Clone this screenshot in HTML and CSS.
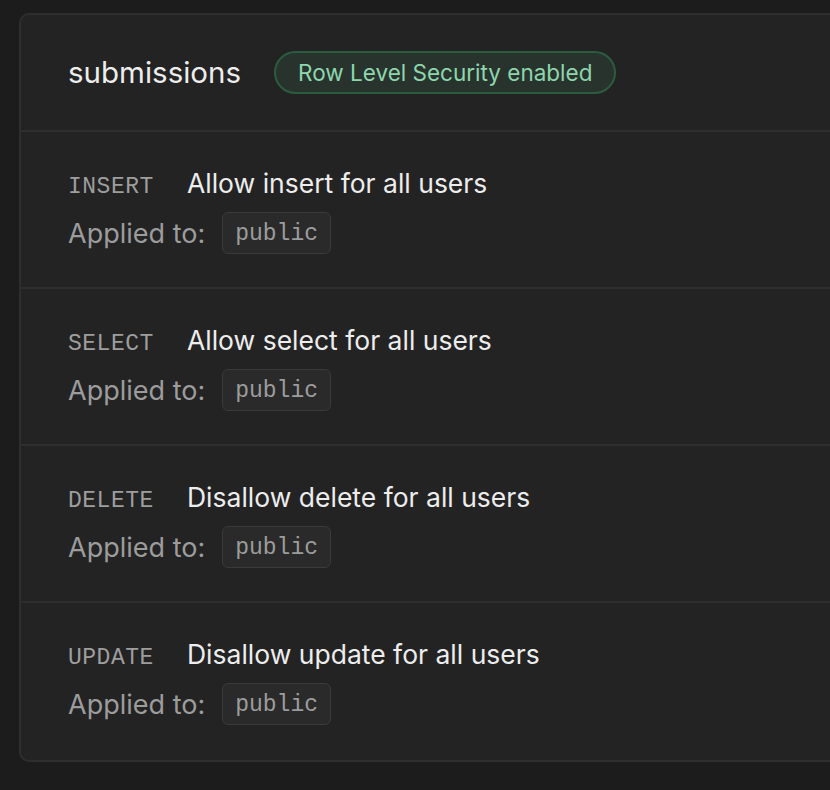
FILE: index.html
```html
<!DOCTYPE html>
<html>
<head>
<meta charset="utf-8">
<link rel="stylesheet" href="styles.css">
</head>
<body>
<div class="page">
  <section class="card">
    <header class="card-head">
      <h1 class="title">submissions</h1>
      <span class="badge">Row Level Security enabled</span>
    </header>
    <div class="policy">
      <div class="line1"><span class="method">INSERT</span><span class="name">Allow insert for all users</span></div>
      <div class="line2"><span class="label">Applied to:</span><code class="chip">public</code></div>
    </div>
    <div class="policy">
      <div class="line1"><span class="method">SELECT</span><span class="name">Allow select for all users</span></div>
      <div class="line2"><span class="label">Applied to:</span><code class="chip">public</code></div>
    </div>
    <div class="policy">
      <div class="line1"><span class="method">DELETE</span><span class="name">Disallow delete for all users</span></div>
      <div class="line2"><span class="label">Applied to:</span><code class="chip">public</code></div>
    </div>
    <div class="policy">
      <div class="line1"><span class="method">UPDATE</span><span class="name">Disallow update for all users</span></div>
      <div class="line2"><span class="label">Applied to:</span><code class="chip">public</code></div>
    </div>
  </section>
</div>
</body>
</html>
```

FILE: styles.css
```css
html, body {
  margin: 0;
  padding: 0;
  background: #1c1c1c;
  height: 100%;
  overflow: hidden;
}
body {
  font-family: "Inter", "Noto Sans", sans-serif;
  color: #ededed;
}
.page {
  padding: 13px 0 0 19px;
}
.card {
  width: 840px;
  background: #232323;
  border: 2px solid #2e2e2e;
  border-radius: 10px;
  box-sizing: border-box;
}
.card-head {
  display: flex;
  align-items: center;
  gap: 33px;
  padding: 35px 0 35px 47px;
  border-bottom: 2px solid #2e2e2e;
}
.title {
  margin: 0;
  font-size: 29.5px;
  font-weight: 400;
  color: #ededed;
  line-height: 45px;
}
.badge {
  display: inline-flex;
  align-items: center;
  height: 43px;
  box-sizing: border-box;
  padding: 0 22px;
  border: 2px solid #2c5c40;
  background: #29332d;
  border-radius: 22px;
  color: #8ed6ad;
  font-size: 22.5px;
}
.policy {
  padding: 36px 0 33px 47px;
  border-bottom: 2px solid #2e2e2e;
  display: flex;
  flex-direction: column;
  gap: 14px;
}
.policy:last-child {
  border-bottom: none;
  padding-bottom: 35px;
}
.line1 {
  display: flex;
  align-items: baseline;
  height: 30px;
  line-height: 30px;
}
.method {
  font-family: "Liberation Mono", monospace;
  font-size: 23px;
  color: #9e9e9e;
  width: 119px;
  flex: none;
  letter-spacing: 0.5px;
}
.name {
  font-size: 26.5px;
  color: #ededed;
}
.line2 {
  display: flex;
  align-items: center;
  gap: 17px;
}
.label {
  font-size: 27px;
  color: #9c9c9c;
}
.chip {
  display: inline-flex;
  align-items: center;
  height: 42px;
  box-sizing: border-box;
  padding: 2px 12px 0;
  background: #2a2a2a;
  border: 1px solid #3a3a3a;
  border-radius: 6px;
  font-family: "Liberation Mono", monospace;
  font-size: 23px;
  color: #9c9c9c;
}
```
